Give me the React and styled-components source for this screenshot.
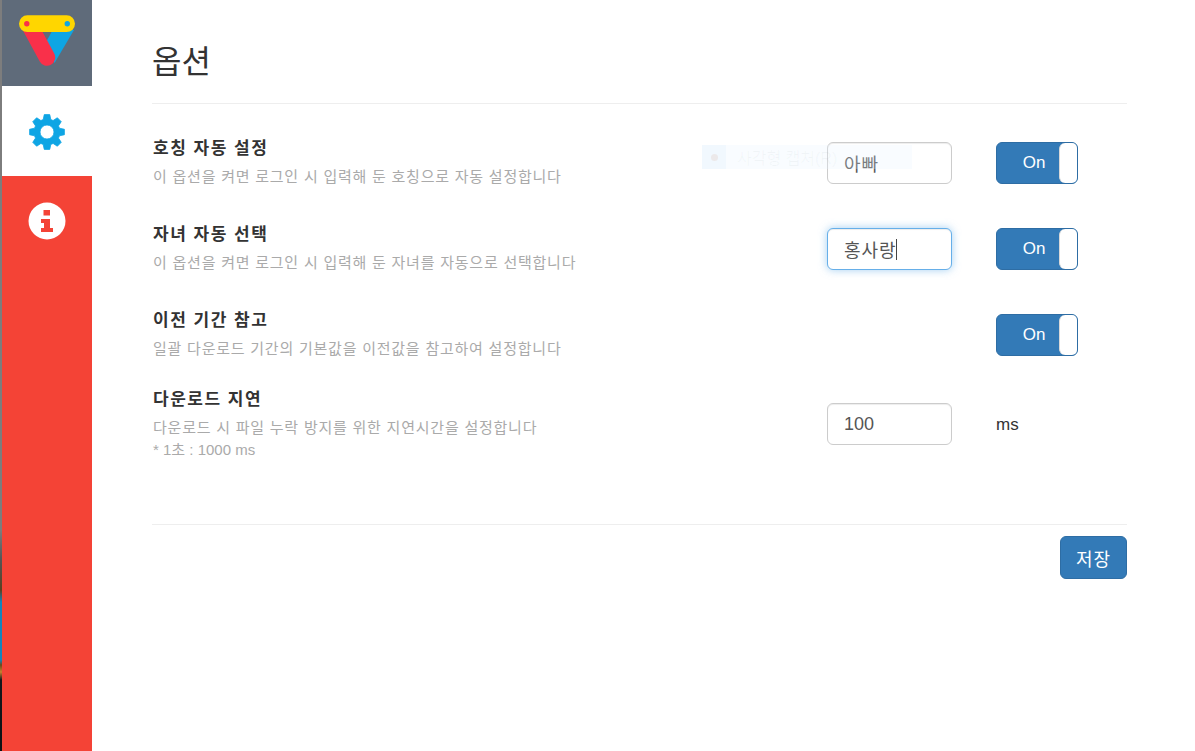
import React from "react";
import styled, { createGlobalStyle, css } from "styled-components";

const Global = createGlobalStyle`
  html, body { margin: 0; padding: 0; height: 100%; background: #fff; overflow: hidden; }
  #root { height: 100%; }
  * { box-sizing: border-box; }
  body { font-family: "Liberation Sans", "Noto Sans CJK KR", sans-serif; color: #333; }
`;

const Page = styled.div`
  position: relative;
  display: flex;
  width: 1195px;
  height: 751px;
`;

const DesktopEdge = styled.div`
  flex: 0 0 2px;
  background: linear-gradient(
    to bottom,
    #7d7d7d 0, #7d7d7d 530px, #555 560px, #5b4020 590px,
    #1285bd 602px, #1285bd 660px, #6a4a1c 665px, #c9812f 672px, #12181c 680px, #0c1114 751px
  );
`;

const Sidebar = styled.nav`
  flex: 0 0 90px;
  display: flex;
  flex-direction: column;
  background: #f44336;
`;

const LogoTile = styled.div`
  height: 86px;
  background: #5f6b7a;
  display: flex;
  justify-content: center;
  padding-top: 14px;
`;

const Tab = styled.div`
  height: 90px;
  display: flex;
  align-items: center;
  justify-content: center;
  background: ${(p) => (p.$active ? "#fff" : "transparent")};
  padding-top: ${(p) => (p.$active ? "2px" : "0")};
`;

const Main = styled.main`
  flex: 0 0 975px;
  margin-left: 60px;
  display: flex;
  flex-direction: column;
`;

const Title = styled.h1`
  margin: 0;
  height: 104px;
  padding-top: 36px;
  font-size: 32px;
  line-height: 46px;
  font-weight: 400;
  color: #333;
  border-bottom: 1px solid #eee;
  font-family: "Noto Sans CJK KR", sans-serif;
`;

const Rows = styled.div`
  display: flex;
  flex-direction: column;
  padding-top: 32px;
  height: 421px;
  border-bottom: 1px solid #eee;
`;

const Row = styled.div`
  display: flex;
  align-items: flex-start;
  height: ${(p) => p.$h}px;
`;

const Info = styled.div`
  flex: 1;
  min-width: 0;
  padding: 1px 0 0 1px;
`;

const RowTitle = styled.div`
  font-size: 17px;
  line-height: 24px;
  font-weight: 700;
  letter-spacing: 1.5px;
  color: #333;
`;

const Desc = styled.div`
  font-size: 15px;
  line-height: 22px;
  letter-spacing: 0.77px;
  color: #aaa;
  margin-top: 5px;
`;

const Hint = styled.div`
  font-size: 15px;
  line-height: 22px;
  color: #aaa;
`;

const Field = styled.input`
  display: block;
  width: 125px;
  height: 42px;
  padding: 0 16px;
  font-size: 18px;
  letter-spacing: ${(p) => (p.$ko ? "1px" : "0")};
  font-family: inherit;
  color: #555;
  background: #fff;
  border: 1px solid #ccc;
  border-radius: 6px;
  outline: none;
  box-shadow: inset 0 1px 1px rgba(0, 0, 0, 0.075);
  ${(p) =>
    p.$focus &&
    css`
      border-color: #66afe9;
      box-shadow: inset 0 1px 1px rgba(0, 0, 0, 0.075), 0 0 8px rgba(102, 175, 233, 0.6);
    `}
`;

const FieldSlot = styled.div`
  position: relative;
  flex: 0 0 125px;
  margin-top: ${(p) => p.$top}px;
`;

const TextCaret = styled.span`
  position: absolute;
  left: 69px;
  top: 11px;
  width: 1px;
  height: 21px;
  background: #444;
`;

const Control = styled.div`
  flex: 0 0 175px;
  padding-left: 44px;
  margin-top: ${(p) => p.$top}px;
`;

const Toggle = styled.div`
  display: flex;
  width: 82px;
  height: 42px;
  border: 1px solid #2e6da4;
  border-radius: 6px;
  overflow: hidden;
  background: #337ab7;
`;

const ToggleOn = styled.span`
  flex: 1;
  display: flex;
  align-items: center;
  justify-content: center;
  padding-left: 12px;
  color: #fff;
  font-size: 17px;
`;

const ToggleHandle = styled.span`
  flex: 0 0 18px;
  background: #fff;
  border-left: 1px solid #d8d8d8;
  border-radius: 6px 0 0 6px;
`;

const Unit = styled.div`
  font-size: 17px;
  line-height: 42px;
  padding-top: 1px;
  color: #333;
`;

const Footer = styled.div`
  display: flex;
  justify-content: flex-end;
  padding-top: 11px;
`;

const SaveButton = styled.button`
  width: 67px;
  height: 43px;
  background: #337ab7;
  border: 1px solid #2e6da4;
  border-radius: 6px;
  color: #fff;
  font-size: 18px;
  letter-spacing: 1px;
  font-family: inherit;
  padding: 0;
`;

const GhostMenu = styled.div`
  position: absolute;
  left: 702px;
  top: 145px;
  width: 210px;
  height: 24px;
  display: flex;
  align-items: center;
  background: rgba(230, 242, 255, 0.25);
  color: rgba(120, 130, 140, 0.06);
  font-size: 16px;
  pointer-events: none;
`;

const GhostIcon = styled.span`
  flex: 0 0 24px;
  height: 24px;
  display: flex;
  align-items: center;
  justify-content: center;
  background: rgba(220, 235, 250, 0.25);
  margin-right: 11px;
  &::before {
    content: "";
    width: 7px;
    height: 7px;
    border-radius: 50%;
    background: rgba(200, 110, 60, 0.1);
  }
`;

const Logo = () => (
  <svg width="58" height="54" viewBox="18 14 58 54">
    <path d="M52.7 30 H74 L54.5 63 L46 42 Z" fill="#0ea5e4" />
    <line x1="31" y1="28" x2="47" y2="57.5" stroke="#f9304a" strokeWidth="16.5" strokeLinecap="round" />
    <rect x="19" y="15.3" width="56" height="16.8" rx="8.4" fill="#ffd600" />
    <circle cx="26.8" cy="23.7" r="2.7" fill="#f9304a" />
    <circle cx="67.3" cy="23.7" r="2.7" fill="#0ea5e4" />
  </svg>
);

const gearPath = (() => {
  const pt = (r, deg) => {
    const a = ((deg - 90) * Math.PI) / 180;
    return `${(19 + r * Math.cos(a)).toFixed(2)} ${(19 + r * Math.sin(a)).toFixed(2)}`;
  };
  const pts = [];
  for (let i = 0; i < 8; i++) {
    const c = i * 45;
    pts.push(pt(13, c - 17), pt(17.6, c - 9), pt(17.6, c + 9), pt(13, c + 17));
  }
  return `M${pts.join(" L")} Z M12 19 A7 7 0 1 0 26 19 A7 7 0 1 0 12 19 Z`;
})();

const Gear = () => (
  <svg width="38" height="38" viewBox="0 0 38 38">
    <path d={gearPath} fill="#0ea5e4" fillRule="evenodd" stroke="#0ea5e4" strokeWidth="0.8" strokeLinejoin="round" />
  </svg>
);

const InfoIcon = () => (
  <svg width="38" height="38" viewBox="0 0 38 38">
    <circle cx="19" cy="19" r="18.5" fill="#fff" />
    <rect x="15.5" y="8" width="6.5" height="5.5" fill="#f44336" />
    <path d="M13 17 H22 V26 H25 V30 H13 V26 H16 V21 H13 Z" fill="#f44336" />
  </svg>
);

const SwitchOn = () => (
  <Toggle>
    <ToggleOn>On</ToggleOn>
    <ToggleHandle />
  </Toggle>
);

export default function App() {
  return (
    <Page>
      <Global />
      <DesktopEdge />
      <Sidebar>
        <LogoTile><Logo /></LogoTile>
        <Tab $active><Gear /></Tab>
        <Tab><InfoIcon /></Tab>
      </Sidebar>
      <Main>
        <Title>옵션</Title>
        <Rows>
          <Row $h={86}>
            <Info>
              <RowTitle>호칭 자동 설정</RowTitle>
              <Desc>이 옵션을 켜면 로그인 시 입력해 둔 호칭으로 자동 설정합니다</Desc>
            </Info>
            <FieldSlot $top={6}><Field $ko defaultValue="아빠" /></FieldSlot>
            <Control $top={6}><SwitchOn /></Control>
          </Row>
          <Row $h={86}>
            <Info>
              <RowTitle>자녀 자동 선택</RowTitle>
              <Desc>이 옵션을 켜면 로그인 시 입력해 둔 자녀를 자동으로 선택합니다</Desc>
            </Info>
            <FieldSlot $top={6}>
              <Field $ko $focus defaultValue="홍사랑" />
              <TextCaret />
            </FieldSlot>
            <Control $top={6}><SwitchOn /></Control>
          </Row>
          <Row $h={79}>
            <Info>
              <RowTitle>이전 기간 참고</RowTitle>
              <Desc>일괄 다운로드 기간의 기본값을 이전값을 참고하여 설정합니다</Desc>
            </Info>
            <Control $top={6}><SwitchOn /></Control>
          </Row>
          <Row $h={90}>
            <Info>
              <RowTitle>다운로드 지연</RowTitle>
              <Desc>다운로드 시 파일 누락 방지를 위한 지연시간을 설정합니다</Desc>
              <Hint>* 1초 : 1000 ms</Hint>
            </Info>
            <FieldSlot $top={16}><Field defaultValue="100" /></FieldSlot>
            <Control $top={16}><Unit>ms</Unit></Control>
          </Row>
        </Rows>
        <Footer><SaveButton>저장</SaveButton></Footer>
      </Main>
      <GhostMenu><GhostIcon />사각형 캡처(R)</GhostMenu>
    </Page>
  );
}
